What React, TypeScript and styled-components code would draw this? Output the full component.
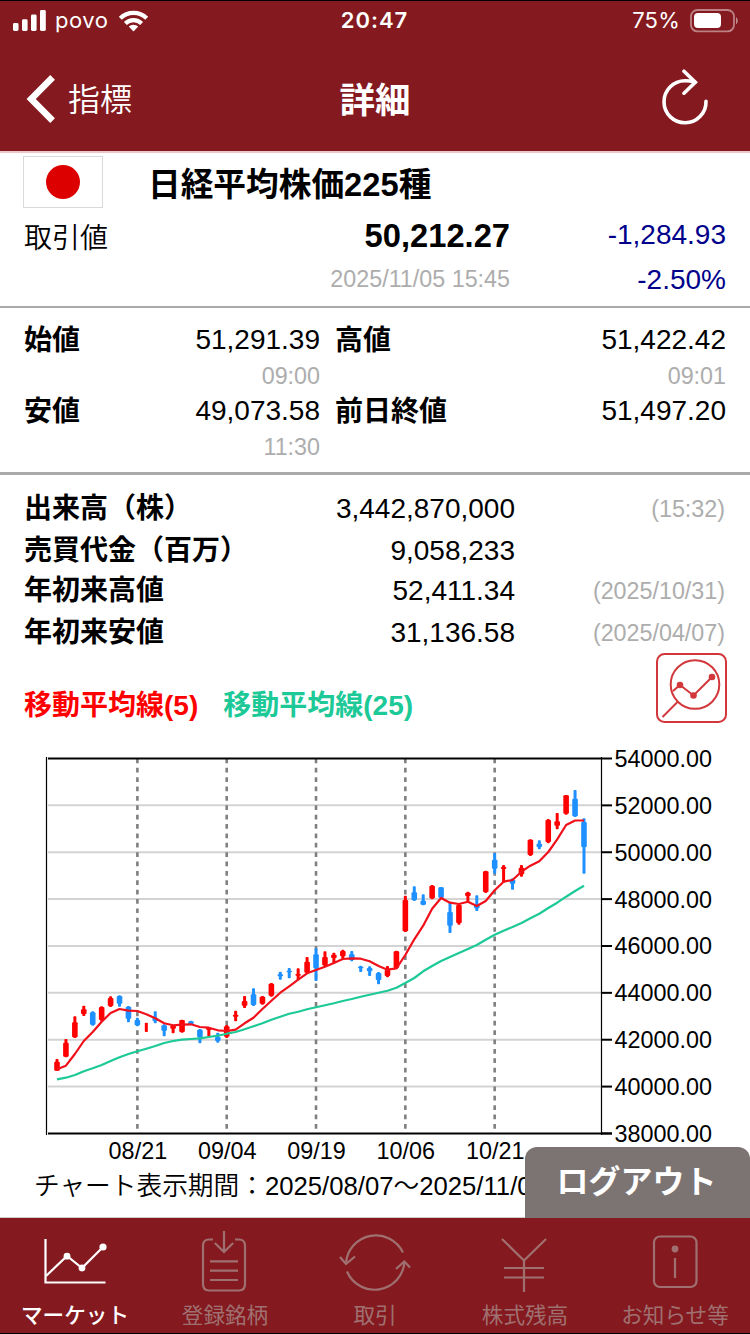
import React from "react";
import styled, { createGlobalStyle } from "styled-components";

const MAROON = "#841a1f";
const MUTED = "#a07071";

const GlobalStyle = createGlobalStyle`
  * { box-sizing: border-box; }
  body {
    margin: 0;
    background: #fff;
    color: #000;
    font-family: "Liberation Sans", "Noto Sans CJK JP", sans-serif;
  }
  svg { display: block; flex: none; }
`;

const Screen = styled.div`
  width: 750px;
  height: 1334px;
  display: flex;
  flex-direction: column;
  overflow: hidden;
  background: #fff;
`;

/* ---------- header ---------- */

const Header = styled.header`
  height: 153px;
  flex: none;
  background: ${MAROON};
  border-top: 1px solid #000;
  border-bottom: 2px solid #efc6c8;
`;

const StatusBar = styled.div`
  height: 39px;
  padding: 0 12px 0 13px;
  display: grid;
  grid-template-columns: 1fr auto 1fr;
  align-items: center;
  color: #fff;
  font-family: Inter, sans-serif;
  font-size: 22px;
  line-height: 39px;
`;

const StatusGroup = styled.div<{ $end?: boolean }>`
  display: flex;
  align-items: center;
  justify-content: ${(p) => (p.$end ? "flex-end" : "flex-start")};
`;

const Carrier = styled.span`
  margin: 0 10px 0 9px;
  letter-spacing: 0.5px;
`;

const Clock = styled.span`
  margin-right: 2px;
  font-weight: 600;
  letter-spacing: 1px;
`;

const BatteryLevel = styled.span`
  margin-right: 10px;
  letter-spacing: 0.2px;
`;

const NavBar = styled.div`
  height: 111px;
  padding: 8px 41px 0 26px;
  display: grid;
  grid-template-columns: 1fr auto 1fr;
  color: #fff;
  line-height: 104px;
`;

const BackButton = styled.div`
  display: flex;
  align-items: center;
  gap: 12px;
  height: 104px;
  font-size: 32px;
  font-weight: 350;
`;

const Title = styled.h1`
  margin: 0 0 0 15px;
  font-size: 35.5px;
  line-height: 107px;
  font-weight: 700;
`;

const ReloadButton = styled.div`
  display: flex;
  height: 98px;
  align-items: center;
  justify-content: flex-end;
`;

/* ---------- quote ---------- */

const Quote = styled.section`
  height: 155px;
  flex: none;
  padding: 3px 24px 0 23px;
  border-bottom: 2px solid #aaa;
`;

const NameRow = styled.div`
  display: flex;
  height: 57px;
`;

const Flag = styled.div`
  width: 80px;
  height: 52px;
  flex: none;
  border: 1px solid #d9d9d9;
  display: flex;
  align-items: center;
  justify-content: center;
`;

const Sun = styled.div`
  width: 34px;
  height: 34px;
  border-radius: 50%;
  background: #dc0000;
`;

const Name = styled.h2`
  margin: 0 0 0 45px;
  font-size: 32.7px;
  line-height: 57px;
  font-weight: 700;
`;

const PriceRow = styled.div<{ $h: number }>`
  display: grid;
  grid-template-columns: 186px 300px 216px;
  height: ${(p) => p.$h}px;
  line-height: ${(p) => p.$h}px;
  padding-left: 1px;
  font-size: 28px;
  text-align: right;
`;

const PriceLabel = styled.span`
  text-align: left;
  font-weight: 350;
  padding-top: 4px;
`;

const Price = styled.span`
  padding-top: 1px;
  font-size: 32.7px;
  font-weight: 700;
`;

const Muted = styled.span`
  font-size: 23.3px;
  color: #adadad;
`;

const Change = styled.span`
  color: #00008b;
`;

/* ---------- open / high / low / close ---------- */

const Ohlc = styled.section`
  height: 167px;
  flex: none;
  padding: 14px 24px 0;
  border-bottom: 3px solid #aaa;
  display: grid;
  grid-template-columns: 60px 236px 15px 131px 260px;
  grid-template-rows: 71px 70px;
  font-size: 28px;
  line-height: 36px;
`;

const OhlcLabel = styled.span<{ $col: number }>`
  grid-column: ${(p) => p.$col};
  padding-top: 1px;
  font-weight: 700;
  white-space: nowrap;
`;

const OhlcValue = styled.div`
  display: flex;
  flex-direction: column;
  align-items: flex-end;
`;

const OhlcTime = styled(Muted)`
  line-height: 36px;
`;

/* ---------- statistics ---------- */

const Stats = styled.section`
  padding: 13px 25px 0 24px;
  flex: none;
`;

const StatRow = styled.div<{ $h: number }>`
  display: grid;
  grid-template-columns: 261px 230px 210px;
  height: ${(p) => p.$h}px;
  line-height: ${(p) => p.$h}px;
  font-size: 28px;
  text-align: right;
`;

const StatLabel = styled.span`
  font-weight: 700;
  text-align: left;
  white-space: nowrap;
`;

const LegendRow = styled.div`
  display: flex;
  height: 70px;
  margin-top: -3px;
  padding: 0 23px 0 24px;
  font-size: 28px;
  font-weight: 700;
  line-height: 106px;
`;

const Legend = styled.span<{ $color: string }>`
  color: ${(p) => p.$color};
  margin-right: 25px;
`;

const ChartButton = styled.div`
  margin-left: auto;
`;

/* ---------- chart ---------- */

const ChartArea = styled.div`
  height: 447px;
  flex: none;
`;

const PeriodRow = styled.div`
  height: 48px;
  flex: none;
  padding-left: 34px;
  white-space: nowrap;
  font-size: 25.7px;
  line-height: 32px;
  font-weight: 350;
  border-bottom: 1px solid #d0cccc;
`;

/* ---------- bottom ---------- */

const Bottom = styled.footer`
  position: relative;
  height: 116px;
  flex: none;
  display: grid;
  grid-template-columns: repeat(5, 150px);
  background: ${MAROON};
  border-bottom: 1px solid #000;
`;

const Logout = styled.div`
  position: absolute;
  right: 0;
  bottom: 115px;
  width: 225px;
  height: 71px;
  border-radius: 12px 12px 0 0;
  background: #7b7473;
  color: #fff;
  font-size: 32px;
  font-weight: 700;
  line-height: 71px;
  text-align: center;
  padding-right: 2px;
`;

const Tab = styled.div<{ $active?: boolean }>`
  display: flex;
  flex-direction: column;
  align-items: center;
  padding-top: 7px;
  color: ${(p) => (p.$active ? "#fff" : MUTED)};
  font-size: 21.6px;
  font-weight: ${(p) => (p.$active ? 500 : 400)};
  line-height: 37px;
  white-space: nowrap;
`;

/* ---------- chart data: colour, high, body top, body bottom, low ---------- */

type Candle = ["r" | "b", number, number, number, number];

const candles: Candle[] = [
  ["r", 1059, 1061.7, 1070.7, 1070.7], ["r", 1039, 1042.7, 1056.7, 1057.3],
  ["r", 1016.3, 1022.3, 1037.3, 1038], ["r", 1005.7, 1009.3, 1014, 1016],
  ["b", 1011.3, 1012.3, 1024.7, 1025.7], ["r", 1006.3, 1007, 1020, 1021.5],
  ["r", 996.3, 998, 1006, 1007], ["b", 995.3, 996, 1003.7, 1006.7],
  ["b", 1006, 1006.7, 1018.7, 1022.3], ["b", 1017.7, 1020, 1025.3, 1026.3],
  ["r", 1022.7, 1023, 1023, 1032], ["b", 1011.3, 1017.7, 1021, 1023.3],
  ["b", 1024.3, 1025.3, 1030.7, 1036.3], ["r", 1025, 1025.7, 1028.7, 1033.3],
  ["r", 1019.7, 1020, 1032, 1032.7], ["b", 1020.7, 1021.3, 1024, 1024.7],
  ["b", 1029, 1029.7, 1037.3, 1043.3], ["r", 1027.7, 1028, 1030, 1036.7],
  ["b", 1032.7, 1037, 1041, 1042.7], ["r", 1025, 1026.3, 1036.7, 1038],
  ["r", 1010.7, 1014.7, 1016.7, 1021.3], ["r", 996, 1001, 1005.7, 1008],
  ["b", 988.3, 994.3, 1005, 1006], ["r", 996, 996.7, 1003.7, 1004.7],
  ["r", 983, 983.7, 995.7, 996.7], ["b", 971.7, 974.3, 976.3, 979.7],
  ["b", 968, 970.7, 972.3, 978.3], ["r", 968.3, 974, 975.7, 980.3],
  ["r", 957, 961.7, 972.7, 974], ["b", 948.3, 954.3, 968.3, 981],
  ["r", 951.3, 957, 965.3, 966.7], ["r", 952.7, 954.7, 958, 963.3],
  ["r", 949.7, 951, 956.3, 959], ["b", 951, 954.3, 960, 961.3],
  ["b", 965.7, 966.7, 968.3, 972], ["b", 966.3, 968, 971.3, 976],
  ["b", 972, 973, 980, 984.3], ["r", 966, 970, 976, 977.3],
  ["r", 950.7, 951.3, 968, 969], ["r", 895.7, 900, 931.3, 932],
  ["b", 886.3, 892.3, 900, 901], ["b", 894.3, 900.7, 904.7, 905.3],
  ["r", 885, 885.7, 898.3, 899.3], ["b", 887, 887.3, 897.7, 898.3],
  ["b", 902.7, 912, 925.7, 933], ["r", 904, 905, 923, 924.7],
  ["r", 891.7, 892.7, 896, 902], ["b", 895.3, 904.7, 908.3, 911],
  ["r", 870.7, 871.3, 892, 893], ["b", 853, 859.7, 868.7, 873.7],
  ["r", 865, 867, 869, 882.7], ["b", 878.3, 879.7, 883.7, 889.7],
  ["r", 865, 867.7, 874.3, 876.7], ["r", 839.3, 839.7, 855, 856],
  ["b", 840.3, 843.7, 847, 849.3], ["r", 819, 820, 842, 843.3],
  ["r", 813, 821.3, 825.7, 829.3], ["r", 795, 795.3, 813.7, 814.7],
  ["b", 790, 798.7, 816.3, 817], ["b", 818.3, 822, 847, 873.7],
];

const ma5 = [
  1069.3, 1065.7, 1054, 1041, 1032, 1021.7, 1013, 1009, 1010.7, 1011, 1014.3, 1018.3,
  1023.3, 1025.3, 1024.7, 1024.3, 1027, 1027.7, 1030.3, 1031, 1029.7, 1023.3, 1017.7,
  1009, 1000.7, 992.7, 986.3, 979.7, 973.3, 970, 966.7, 963, 959, 958.3, 958.7, 961.3,
  966, 969.7, 968.3, 955, 939.3, 925.7, 908.7, 898, 902.7, 904, 901.7, 906, 901, 890.3,
  881.7, 880, 871.7, 865.7, 861.3, 852, 839.3, 825, 820.5, 820.5,
];

const ma25 = [
  1079.3, 1077.7, 1075, 1071.3, 1068.3, 1065, 1061, 1057.3, 1054, 1051.3, 1048.7, 1046,
  1043, 1041, 1039.7, 1039, 1038.3, 1037, 1035.7, 1033.7, 1032, 1029.3, 1026.3, 1023.3,
  1019.7, 1016.7, 1013.7, 1011.7, 1009.3, 1007.3, 1005.3, 1003.3, 1001, 999, 996.7,
  994.7, 992.7, 990.7, 987.7, 983, 978, 971.3, 966, 961, 957, 953, 949, 945, 939.7,
  934.7, 930.7, 927, 923, 918.3, 913.7, 908, 902.7, 896.7, 891, 885.7,
];

const dates: [number, string][] = [
  [9, "08/21"], [19, "09/04"], [29, "09/19"], [39, "10/06"], [49, "10/21"],
];
const prices = [54000, 52000, 50000, 48000, 46000, 44000, 42000, 40000, 38000];

const cx = (i: number) => 57 + i * 8.932;
const py = (i: number) => 758.5 + i * 46.87;
const line = (ys: number[]) => ys.map((y, i) => `${cx(i).toFixed(1)},${y}`).join(" ");

function Chart() {
  return (
    <svg
      width="750"
      height="447"
      viewBox="0 723 750 447"
      fontFamily="'Liberation Sans', sans-serif"
      fontSize="23.4"
    >
      {prices.slice(1, 8).map((p, i) => (
        <path key={p} d={`M48 ${py(i + 1)}H601`} stroke="#d3d3d3" strokeWidth="2" />
      ))}
      {dates.map(([i, label]) => (
        <g key={label}>
          <path
            d={`M${cx(i)} 758.5V1131`}
            stroke="#808080"
            strokeWidth="2.6"
            strokeDasharray="4.7 4.67"
          />
          <text x={cx(i) + 0.5} y="1159" textAnchor="middle">{label}</text>
        </g>
      ))}
      {candles.map(([c, high, top, bottom, low], i) => (
        <g key={i} fill={c === "r" ? "#ff0000" : "#1e90ff"}>
          <rect x={cx(i) - 1.5} y={high} width="3" height={low - high} rx="0.8" />
          {bottom > top && (
            <rect x={cx(i) - 2.8} y={top} width="5.6" height={bottom - top} rx="1" />
          )}
        </g>
      ))}
      <polyline points={line(ma25)} fill="none" stroke="#1cc997" strokeWidth="2.2" strokeLinejoin="round" />
      <polyline points={line(ma5)} fill="none" stroke="#f0101a" strokeWidth="2.2" strokeLinejoin="round" />
      <path d="M46.5 757V1135M601.5 757V1135" stroke="#000" strokeWidth="1.2" />
      <path d="M48 758.5H601M48 1133.5H612" stroke="#000" strokeWidth="2" />
      {prices.map((p, i) => (
        <g key={p}>
          <path d={`M602 ${py(i)}H612`} stroke="#000" strokeWidth="2" />
          <text x="614.5" y={py(i) + 8.4}>{p}.00</text>
        </g>
      ))}
    </svg>
  );
}

function TabIcon({ x, children }: { x: number; children: React.ReactNode }) {
  return (
    <svg
      width="80"
      height="72"
      viewBox={`${x - 40} 1225 80 72`}
      fill="none"
      stroke="currentColor"
      strokeWidth="2.2"
    >
      {children}
    </svg>
  );
}

export default function App() {
  return (
    <Screen>
      <GlobalStyle />
      <Header>
        <StatusBar>
          <StatusGroup>
            <svg width="33" height="22" viewBox="13 9 33 22" fill="#fff">
              <rect x="13" y="22" width="5.5" height="8" rx="1.4" />
              <rect x="22" y="18.3" width="5.6" height="11.7" rx="1.4" />
              <rect x="31" y="13.4" width="5.6" height="16.6" rx="1.4" />
              <rect x="40" y="9" width="5.8" height="21" rx="1.4" />
            </svg>
            <Carrier>povo</Carrier>
            <svg width="31" height="23" viewBox="118 8 31 23" fill="none" stroke="#fff" strokeWidth="4.2">
              <path d="M120.3 17.2A19 19 0 0 1 146.7 17.2" />
              <path d="M125.4 22.4A11.6 11.6 0 0 1 141.6 22.4" />
              <path d="M128.8 25.6A6.8 6.8 0 0 1 138.2 25.6L133.5 30.6Z" fill="#fff" stroke="none" />
            </svg>
          </StatusGroup>
          <Clock>20:47</Clock>
          <StatusGroup $end>
            <BatteryLevel>75%</BatteryLevel>
            <svg width="48" height="24" viewBox="691 8 48 24">
              <rect x="692" y="9" width="43" height="21.4" rx="6.5" fill="none" stroke="#fff" strokeOpacity=".45" strokeWidth="1.8" />
              <rect x="695" y="12" width="27" height="15" rx="4" fill="#fff" />
              <path d="M737 16.2C739.3 17.5 739.3 21.8 737 23.2Z" fill="#fff" fillOpacity=".5" />
            </svg>
          </StatusGroup>
        </StatusBar>
        <NavBar>
          <BackButton>
            <svg width="30" height="50" viewBox="26 75 30 50" fill="none" stroke="#fff" strokeWidth="6.6">
              <path d="M52.6 77.4L31.2 99L52.6 120.6" />
            </svg>
            指標
          </BackButton>
          <Title>詳細</Title>
          <ReloadButton>
            <svg width="48" height="56" viewBox="661 69 48 56" fill="none" stroke="#fff" strokeWidth="3.6" strokeLinecap="round">
              <path d="M706 101.2A21 21 0 1 1 685 80.8Q690 80.8 695 82.2" />
              <path d="M684 71.2L695.3 82.2L684 93.2" />
            </svg>
          </ReloadButton>
        </NavBar>
      </Header>

      <Quote>
        <NameRow>
          <Flag><Sun /></Flag>
          <Name>日経平均株価225種</Name>
        </NameRow>
        <PriceRow $h={43}>
          <PriceLabel>取引値</PriceLabel>
          <Price>50,212.27</Price>
          <Change>-1,284.93</Change>
        </PriceRow>
        <PriceRow $h={47}>
          <span />
          <Muted>2025/11/05 15:45</Muted>
          <Change>-2.50%</Change>
        </PriceRow>
      </Quote>

      <Ohlc>
        <OhlcLabel $col={1}>始値</OhlcLabel>
        <OhlcValue>51,291.39<OhlcTime>09:00</OhlcTime></OhlcValue>
        <OhlcLabel $col={4}>高値</OhlcLabel>
        <OhlcValue>51,422.42<OhlcTime>09:01</OhlcTime></OhlcValue>
        <OhlcLabel $col={1}>安値</OhlcLabel>
        <OhlcValue>49,073.58<OhlcTime>11:30</OhlcTime></OhlcValue>
        <OhlcLabel $col={4}>前日終値</OhlcLabel>
        <OhlcValue>51,497.20</OhlcValue>
      </Ohlc>

      <Stats>
        <StatRow $h={42}>
          <StatLabel>出来高（株）</StatLabel>
          <span>3,442,870,000</span>
          <Muted>(15:32)</Muted>
        </StatRow>
        <StatRow $h={42}>
          <StatLabel>売買代金（百万）</StatLabel>
          <span>9,058,233</span>
        </StatRow>
        <StatRow $h={38}>
          <StatLabel>年初来高値</StatLabel>
          <span>52,411.34</span>
          <Muted>(2025/10/31)</Muted>
        </StatRow>
        <StatRow $h={46}>
          <StatLabel>年初来安値</StatLabel>
          <span>31,136.58</span>
          <Muted>(2025/04/07)</Muted>
        </StatRow>
      </Stats>

      <LegendRow>
        <Legend $color="#ff0000">移動平均線(5)</Legend>
        <Legend $color="#1cc997">移動平均線(25)</Legend>
        <ChartButton>
          <svg width="71" height="70" viewBox="656 653 71 70" fill="none" stroke="#d2383b" strokeWidth="2">
            <rect x="657" y="654" width="69" height="68" rx="7.5" />
            <circle cx="695" cy="684.5" r="24.3" />
            <path d="M662.5 717L677.5 702M673 691L680 685L693.5 695.5L712 677" />
            <g fill="#d2383b" stroke="none">
              <circle cx="680" cy="685" r="3.3" />
              <circle cx="693.5" cy="695.5" r="3.3" />
              <circle cx="712" cy="677" r="3.3" />
            </g>
          </svg>
        </ChartButton>
      </LegendRow>

      <ChartArea><Chart /></ChartArea>
      <PeriodRow>チャート表示期間：2025/08/07〜2025/11/05</PeriodRow>

      <Bottom>
        <Logout>ログアウト</Logout>
        <Tab $active>
          <TabIcon x={75}>
            <path d="M45.5 1239V1282.5H105.5" />
            <path d="M46 1276L67 1256L82 1268L103 1247" />
            <g fill="currentColor" stroke="none">
              <circle cx="67" cy="1256.2" r="3.4" />
              <circle cx="82" cy="1268" r="3.4" />
              <circle cx="103" cy="1247" r="3.6" />
            </g>
          </TabIcon>
          マーケット
        </Tab>
        <Tab>
          <TabIcon x={225}>
            <path d="M213 1239.5H209Q203 1239.5 203 1246V1284Q203 1290.5 209 1290.5H239Q245 1290.5 245 1284V1246Q245 1239.5 239 1239.5H235" />
            <path d="M224 1231V1251M214.8 1243L224 1252L233.2 1243M210 1261.3H238M210 1270.6H238M210 1280H238" />
          </TabIcon>
          登録銘柄
        </Tab>
        <Tab>
          <TabIcon x={375}>
            <path d="M403 1252.5A30 30 0 0 0 346 1263" />
            <path d="M340 1257L346 1264L355 1256.5" />
            <path d="M347 1271.5A30 30 0 0 0 404.5 1262" />
            <path d="M396 1269L404.3 1261.5L410 1267.5" />
          </TabIcon>
          取引
        </Tab>
        <Tab>
          <TabIcon x={525}>
            <path d="M502 1239L524 1260.5L546 1239M524 1260.5V1292M504 1268H544M504 1277.5H544" />
          </TabIcon>
          株式残高
        </Tab>
        <Tab>
          <TabIcon x={675}>
            <rect x="654" y="1236.5" width="42.5" height="50.5" rx="6" />
            <path d="M675 1258V1278" />
            <circle cx="675" cy="1249" r="3.4" fill="currentColor" stroke="none" />
          </TabIcon>
          お知らせ等
        </Tab>
      </Bottom>
    </Screen>
  );
}
